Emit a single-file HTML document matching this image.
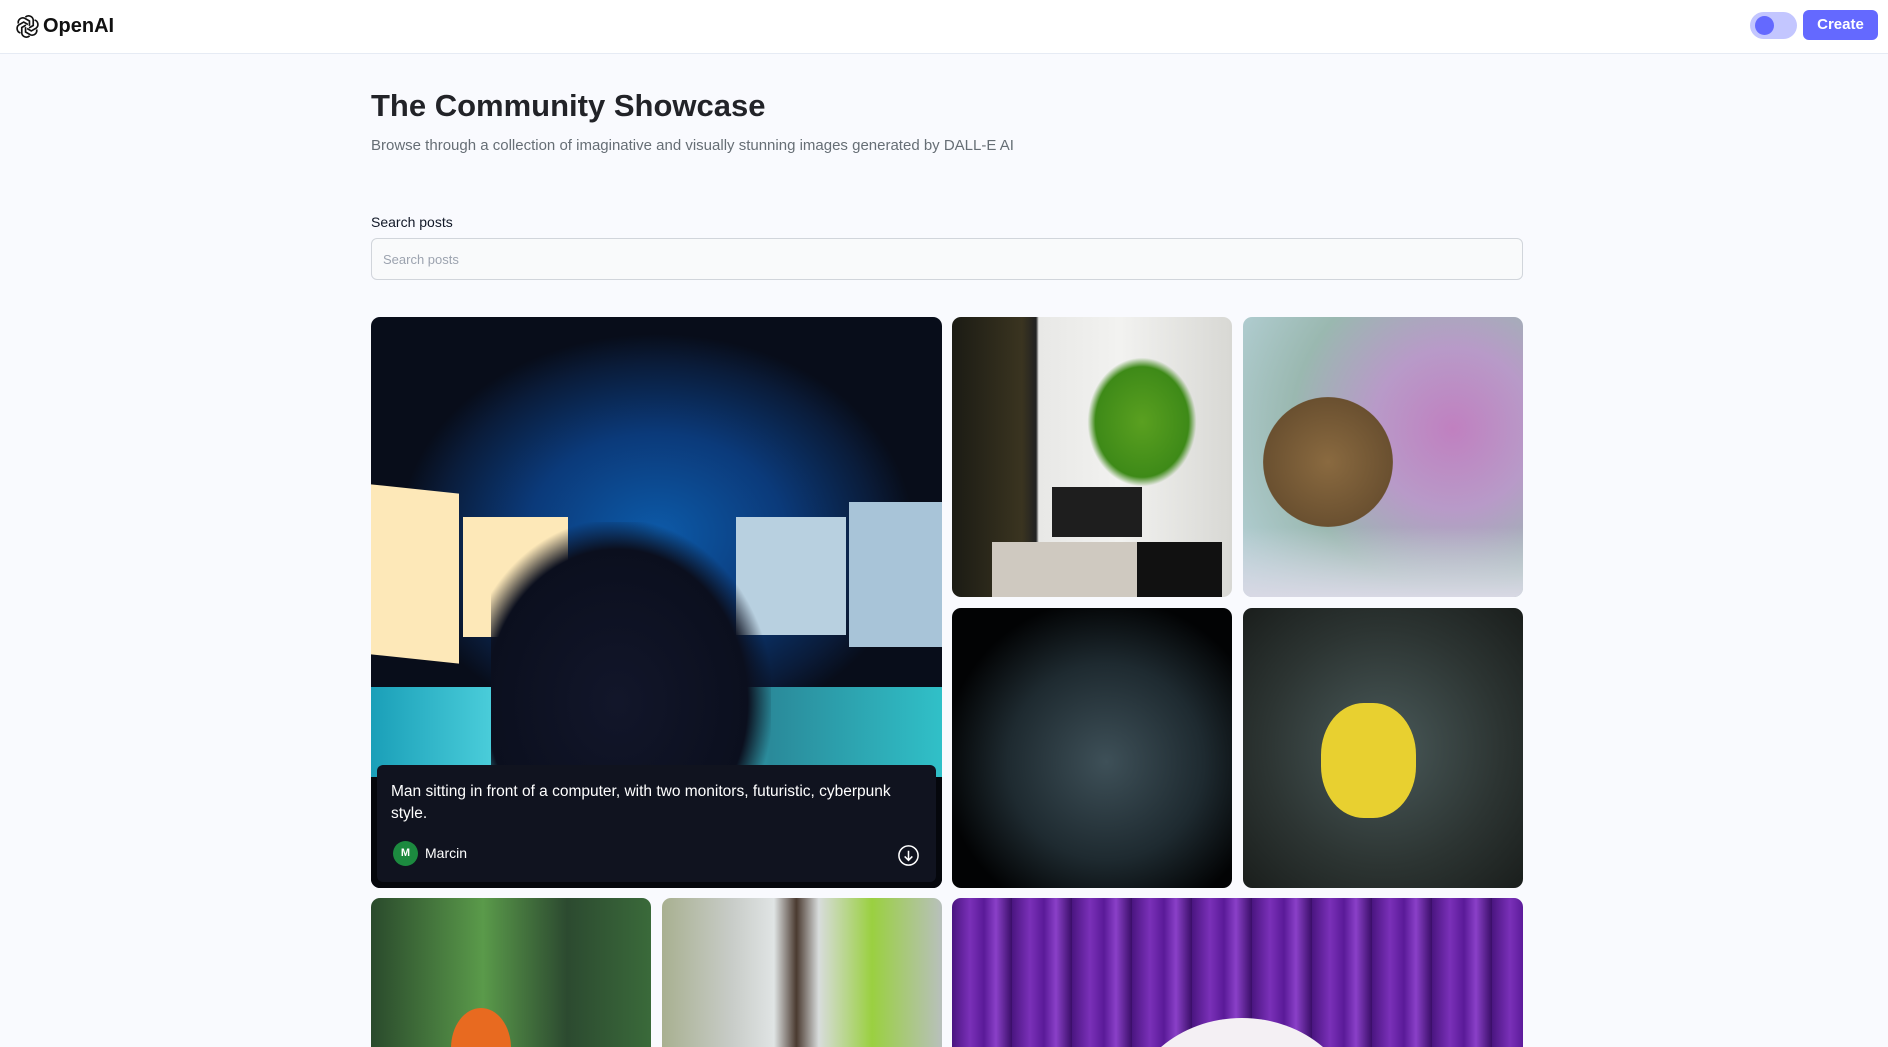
<!DOCTYPE html>
<html><head><meta charset="utf-8"><style>
*{box-sizing:border-box;margin:0;padding:0}
html{width:1888px;height:1047px;overflow:hidden}
body{width:1888px;height:1047px;overflow:hidden;background:#f9fafe;font-family:"Liberation Sans",sans-serif;position:relative}
header{position:absolute;left:0;top:0;width:1888px;height:54px;background:#fff;border-bottom:1px solid #e6ebf4}
.logo{position:absolute;left:15px;top:14px;display:flex;align-items:center;gap:3px;font-weight:bold;font-size:20px;color:#111}
.tog{position:absolute;left:1750px;top:12px;width:47px;height:27px;border-radius:14px;background:#c3c6ff}
.tog i{position:absolute;left:5px;top:4px;width:19px;height:19px;border-radius:50%;background:#6469ff}
.btn{position:absolute;left:1803px;top:10px;width:75px;height:30px;border-radius:6px;background:#6469ff;color:#fff;font-weight:bold;font-size:15px;text-align:center;line-height:30px}
h1{position:absolute;left:371px;top:88px;font-size:31px;font-weight:800;color:#222328}
.sub{position:absolute;left:371px;top:137px;font-size:15px;color:#666e75}
.lab{position:absolute;left:371px;top:214px;font-size:14px;color:#111827}
.inp{position:absolute;left:371px;top:238px;width:1152px;height:42px;border:1px solid #d1d5db;border-radius:6px;background:#f9fafb;font-size:13px;color:#9ca3af;padding:13px 11px}
.wrap{position:absolute;left:371px;top:317px;width:1152px;height:730px;overflow:hidden}
.grid{width:1152px;display:grid;grid-template-columns:repeat(4,280px);grid-auto-rows:280px;gap:10.7px}
.c{border-radius:9px;overflow:hidden;position:relative}
.big{grid-column:span 2;grid-row:span 2}
.ov{position:absolute;left:6px;right:6px;bottom:6px;height:117px;background:#10131f;border-radius:6px;color:#fff;padding:16px 40px 16px 14px}
.ov p{font-size:15.5px;line-height:22px}
.av{position:absolute;left:16px;bottom:16px;width:25px;height:25px;border-radius:50%;background:#1c8a3f;color:#fff;font-size:11px;font-weight:bold;text-align:center;line-height:25px}
.nm{position:absolute;left:48px;bottom:21px;font-size:14px}
.dl{position:absolute;right:16px;bottom:15px}
</style></head><body>
<header>
<div class="logo"><svg width="25" height="25" viewBox="0 0 24 24" fill="none" stroke="#111" stroke-width="1.6"><g transform="translate(12 12)"><path id="p" d="M-2 -9 a4.5 4.5 0 0 1 7.5 2.5 v5.5 l-4 2.3"/><use href="#p" transform="rotate(60)"/><use href="#p" transform="rotate(120)"/><use href="#p" transform="rotate(180)"/><use href="#p" transform="rotate(240)"/><use href="#p" transform="rotate(300)"/></g></svg>OpenAI</div>
<div class="tog"><i></i></div>
<div class="btn">Create</div>
</header>
<h1>The Community Showcase</h1>
<div class="sub">Browse through a collection of imaginative and visually stunning images generated by DALL-E AI</div>
<div class="lab">Search posts</div>
<div class="inp">Search posts</div>
<div class="wrap"><div class="grid">
<div class="c big" style="background:radial-gradient(ellipse 45% 35% at 50% 38%,#0d5aa8,#0b3a7a 50%,#0a1c3a 85%,#080d1a)">
 <div style="position:absolute;left:0;top:172px;width:88px;height:170px;background:#fde8b8;transform:skewY(6deg)"></div>
 <div style="position:absolute;left:92px;top:200px;width:105px;height:120px;background:#fde8b8"></div>
 <div style="position:absolute;left:365px;top:200px;width:110px;height:118px;background:#b8d0e0"></div>
 <div style="position:absolute;left:478px;top:185px;width:93px;height:145px;background:#a8c4d8"></div>
 <div style="position:absolute;left:0;top:370px;width:571px;height:90px;background:linear-gradient(90deg,#1a9fb8,#5ee0e8 30%,#2a8a9a 70%,#30c0c8)"></div>
 <div style="position:absolute;left:120px;top:205px;width:280px;height:300px;background:radial-gradient(ellipse at 45% 60%,#12162a,#0b0f1e 60%,transparent 72%)"></div>
 <div style="position:absolute;left:0;top:460px;width:571px;height:111px;background:#05070c"></div>
 <div class="ov"><p>Man sitting in front of a computer, with two monitors, futuristic, cyberpunk style.</p>
 <div class="av">M</div><div class="nm">Marcin</div>
 <svg class="dl" width="23" height="23" viewBox="0 0 24 24" fill="none" stroke="#fff" stroke-width="1.6"><circle cx="12" cy="12" r="10"/><path d="M12 7v10M8 13l4 4 4-4"/></svg></div>
</div>
<div class="c" style="background:linear-gradient(90deg,#1b1b14 0%,#3a3420 25%,#222 30%,#e8e8e6 31%,#f2f2f0 60%,#d8d8d4 100%)">
 <div style="position:absolute;left:100px;top:170px;width:90px;height:50px;background:#1e1e1e"></div>
 <div style="position:absolute;left:135px;top:40px;width:110px;height:130px;border-radius:50%;background:radial-gradient(#5aa020,#3e8a18 60%,transparent 70%)"></div>
 <div style="position:absolute;left:185px;top:225px;width:85px;height:55px;background:#111"></div>
 <div style="position:absolute;left:40px;top:225px;width:145px;height:55px;background:#cfc9c0"></div>
</div>
<div class="c" style="background:radial-gradient(circle at 75% 40%,#c080c0,#b89ac8 30%,#9ab8b0 60%,#b8d4dc)">
 <div style="position:absolute;left:20px;top:80px;width:130px;height:130px;border-radius:50%;background:radial-gradient(#8a6a40,#6a5030 70%,transparent 72%)"></div>
 <div style="position:absolute;left:0;top:210px;width:280px;height:70px;background:linear-gradient(180deg,transparent,#d8d8e4)"></div>
</div>
<div class="c" style="background:radial-gradient(ellipse at 55% 55%,#3e5058,#1e2a30 45%,#020304 75%)"></div>
<div class="c" style="background:radial-gradient(ellipse at 50% 50%,#4a5a5a,#2c3432 60%,#1a1e1c)">
 <div style="position:absolute;left:78px;top:95px;width:95px;height:115px;border-radius:45%;background:#e8d030"></div>
</div>
<div class="c" style="background:linear-gradient(90deg,#2a4a2c,#5a9a4a 40%,#2c4a30 70%,#3a6a3a)">
 <div style="position:absolute;left:80px;top:110px;width:60px;height:80px;border-radius:50%;background:#e86a20"></div>
</div>
<div class="c" style="background:linear-gradient(90deg,#a8b090,#c8ccc8 25%,#e0e4e4 40%,#4a3a30 48%,#d8dcdc 56%,#9ad040 75%,#b8c0bc)"></div>
<div class="c big" style="background:repeating-linear-gradient(90deg,#4a1580 0,#7a30b8 18px,#5a1a98 32px,#8a40c8 44px,#3a0e68 60px)">
 <div style="position:absolute;left:175px;top:120px;width:230px;height:200px;border-radius:50%;background:#f4f0f4"></div>
</div>
</div></div>
</body></html>
